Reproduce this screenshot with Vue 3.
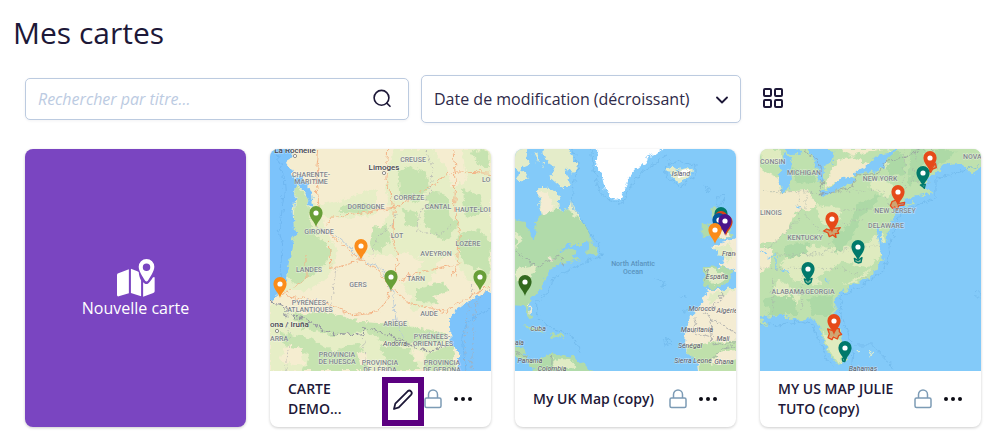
<script setup>
import { ref } from 'vue'

const query = ref('')
const sort = ref('desc')

const GREEN = '#689f38'
const ORANGE = '#fb8c1a'
const RED = '#e64a19'
const TEAL = '#00796b'

const cards = [
  {
    id: 'fr',
    title: 'CARTE DEMO...',
    editing: true,
    origin: 'scale(.33333) translate(-12 -12)',
    base: '#f5edd0',
    shapes: [
      { f: '#e6eec6', d: 'M90 120L115 115 150 180 230 165 330 130 330 210 220 220 165 215 180 260 215 320 190 400 130 435 45 440ZM380 12H500L540 70 560 130 675 60V430L600 400 560 330 520 345 480 440 500 480 440 500 420 440 380 330 300 330 330 270 370 200 360 120ZM12 470L90 500 200 540 420 530 560 590 520 678H12ZM590 12H675V120L600 100Z' },
      { f: '#c6e3b0', d: 'M90 120L125 160 135 240 160 280 195 310 190 340 150 385 90 420 62 390 80 260ZM395 80L430 60 480 85 490 130 450 175 400 150ZM410 190L450 200 460 240 420 245ZM490 140L545 150 550 210 580 240 540 290 500 270 470 230ZM230 180L300 175 330 190 280 205 220 200ZM320 250L360 240 375 290 340 320 310 300ZM590 130L640 150 650 200 600 220ZM570 270L640 250 675 300 670 390 630 370 590 350ZM450 430L530 410 550 440 500 455 520 475 450 470ZM80 510L190 500 280 530 420 540 540 565 530 590 430 600 350 590 300 560 200 570 100 545ZM40 560L130 580 200 620 280 590 310 678H110L130 630 60 610ZM340 600L430 610 460 678H370ZM480 630L560 600 570 678H470ZM610 20L660 12 675 70 640 60Z' },
      { f: '#f5edd0', d: 'M340 350L420 320 470 350 450 400 400 420 440 460 400 500 350 480ZM60 600L110 610 115 660 40 650ZM270 620L300 625 310 660 280 660ZM440 610L475 620 470 650 445 650Z' },
      { f: '#7cc3fb', d: 'M-30 -30H62L78 25 60 50 78 82 92 112 88 135 80 200 84 255 100 262 82 280 70 345 62 390 45 440 10 470H-30ZM92 92L122 112 138 150 142 190 132 180 118 145 92 118ZM720 430L640 450 600 475 560 505 552 530 554 600 580 625 575 720H720Z' }
    ],
    lines: [
      { s: '#f3b487', d: 'M158 12L150 100 160 190 150 245 200 275 285 345 340 380 375 430 430 475 540 500 600 460 675 420M365 12L360 100 385 190 380 280 395 350 375 430M385 190L470 140 560 80 675 85M185 235L200 215 385 190M120 330L120 400 50 450 180 470 250 510 340 500 375 430M190 290L195 370 240 360 285 345M560 12L570 100 565 200 580 260 575 350 560 400M400 410L440 385 560 360' },
      { s: '#b7c9d8', d: 'M151 248L220 280 285 340 350 375 380 440 390 530 415 580' },
      { s: '#68b0ec', w: 2, d: 'M30 20L50 80 55 140 40 260 50 300 40 400M600 678L590 590 600 530 675 490' },
      { s: '#aaaaaf', dash: '8 6', w: 2, d: 'M480 12L500 70 490 145 460 210 455 260 520 270 560 240M320 345L330 280 370 250 400 200M210 370L200 450 190 490M65 500L70 570 60 678M290 550L300 678M620 420L600 530 595 678M675 430L630 470 615 678' },
      { s: '#9698a0', dash: '18 5', w: 4, d: 'M12 468L60 485 60 510 120 520 150 545 200 565 290 570 290 548 370 570 430 600 490 620 555 600' }
    ],
    labels: [
      ['La Rochelle', 25, 4, 'town'], ['Limoges', 114, 21, 'town'], ['CREUSE', 143, 13], ['CHARENTE-', 41, 28], ['MARITIME', 41, 35],
      ['GIRONDE', 49, 85], ['DORDOGNE', 96, 60], ['CORRÈZE', 139, 51], ['CANTAL', 168, 60], ['HAUTE-LOIRE', 185, 63, 'start'], ['LOIRE', 212, 33, 'start'],
      ['LOT', 127, 89], ['LOZÈRE', 198, 97], ['AVEYRON', 166, 107], ['LANDES', 39, 123], ['GERS', 88, 138], ['TARN', 146, 132],
      ['PYRÉNÉES-', 40, 156], ['ATLANTIQUES', 40, 163], ['AUDE', 159, 167], ['ARIÈGE', 125, 177], ['ona / Iruña', 0, 178, 'town start'], ['ARRA', 0, 192, 'start'],
      ['Andorra', 125, 197, 'country'], ['PYRÉNÉES-', 162, 190], ['ORIENTALES', 163, 197], ['PROVINCIA', 67, 208], ['DE HUESCA', 67, 215],
      ['PROVINCIA', 110, 216], ['DE LÉRIDA', 110, 223], ['PROVINCIA', 172, 216], ['DE GERONA', 172, 223]
    ],
    towns: [[25, 7], [114, 24], [7, 182]],
    pins: [[46, 78, GREEN], [91, 111, ORANGE], [121, 142, GREEN], [210, 142, GREEN], [10, 149, ORANGE]]
  },
  {
    id: 'uk',
    title: 'My UK Map (copy)',
    origin: 'scale(.33333) translate(-15 -12)',
    base: '#83caf9',
    shapes: [
      { f: '#e4ecc9', d: 'M-20 -20H60L50 35 58 60 35 70 55 100 20 112 30 80 -20 60ZM95 -20H155L185 30 205 60 190 80 160 72 180 125 160 130 120 95 135 65 105 45ZM85 130L115 128 145 150 150 188 175 198 180 165 195 190 215 230 100 225 85 180ZM470 70L488 65 500 75 545 68 545 92 515 112 485 103 490 85 470 82ZM70 25L85 30 82 50ZM95 50L105 55 100 70Z' },
      { f: '#b1dbaa', d: 'M-20 215L45 232 60 270 78 285 80 250 72 228 100 208 150 190 185 200 215 230 240 260 245 288 215 300 168 300 145 325 185 305 200 318 185 335 215 345 150 355 112 385 100 400 98 430 65 460 52 485 70 515 64 525 50 505 42 482 -20 480ZM230 325L240 290 268 325 250 328ZM605 190L622 185 640 215 660 255 665 275 610 285 622 250 605 215ZM575 240L600 235 602 270 575 277ZM582 363L635 366 670 378 652 410 622 432 602 430 580 420ZM-20 590L40 605 45 630 80 650 125 625 190 635 265 700H80L60 655 -20 620ZM35 540L75 545 108 562 70 560ZM120 565L150 565 165 576 125 578Z' },
      { f: '#f4ecd3', d: 'M85 135L110 145 135 180 115 205 98 212 90 175ZM608 305L640 290 720 265V390L660 372 632 366 642 335ZM600 435L630 435 720 425V710H570L558 640 530 620 525 600 530 545 545 510 575 480 580 455ZM30 380L60 365 75 380 40 400ZM55 470L65 490 60 510ZM110 335L135 340 125 350ZM620 250L655 260 655 275 625 280Z' },
      { f: '#e0ebc4', d: 'M615 310L660 295 675 330 650 350ZM595 450L630 437 660 430 690 430 630 455 600 480ZM590 370L625 375 650 400 615 420 595 400ZM15 255L40 275 20 310ZM20 370L80 360 70 390 20 410ZM130 640L180 645 200 670 130 670Z' },
      { f: '#bfe0ab', d: 'M530 600L600 590 720 585V610L630 620 600 660 720 640V700H575L560 645 530 620Z' },
      { f: '#ffffff', d: 'M270 -20L258 60 275 90 285 135 300 155 330 165 345 130 355 100 380 70 405 60 410 35 440 25 490 -20ZM500 80L535 75 535 90 505 95Z' }
    ],
    lines: [
      { s: '#6db5e8', w: 2, d: 'M185 12L205 60 190 130 185 180 230 250 262 290 275 330 200 365 130 400 115 440 80 470 80 510 120 545 190 575 210 620M245 12L250 70 270 140 300 168 335 175 390 85 470 30M465 60L500 48 555 62 555 95 515 122 470 100ZM585 120L600 130 592 145ZM620 155L640 150 640 175 620 180ZM465 585L480 580 482 598 468 602ZM430 400L465 415 460 425M515 455L525 460M520 500L535 495' },
      { s: '#9698a0', w: 2, d: 'M15 320L80 365 130 340 160 335 160 360M580 505L675 565M555 520L560 535 550 565 600 580M600 525L605 590M635 435L635 465 585 500M610 600L675 590M600 650L640 610 675 600M590 375L588 412M15 620L60 640M125 625L120 690' }
    ],
    labels: [
      ['Island', 166, 27, 'country'], ['France', 207, 107, 'country start'], ['North Atlantic', 118, 117, 'sea'], ['Ocean', 118, 125, 'sea'], ['España', 202, 130, 'country'],
      ['Morocco', 187, 162, 'country'], ['Algérie', 212, 164, 'country'], ['Mauritania', 182, 183, 'country'], ['Mali', 208, 192, 'country'], ['Sénégal', 175, 199, 'country'],
      ['Sierra Leone', 178, 214, 'country'], ['Ghana', 209, 215, 'country'], ['Cuba', 23, 182, 'country'], ['Panama', 15, 214, 'country'], ['Colombia', 37, 222, 'country'], ['ala', 0, 196, 'country start']
    ],
    towns: [],
    pins: [[206, 79, TEAL], [206, 83, '#d84315'], [204, 85, '#01579b'], [211, 87, '#d84315'], [210, 86, '#4a148c'], [200, 95, ORANGE], [10, 147, '#33691e']]
  },
  {
    id: 'us',
    title: 'MY US MAP JULIE TUTO (copy)',
    origin: 'scale(.33333) translate(-12 -12)',
    base: '#bfe1ae',
    shapes: [
      { f: '#f2ebcb', d: 'M-20 60L70 100 75 140 160 135 180 190 120 200 100 250 60 290 -20 300ZM205 130L240 45 300 30 380 12H250L340 60 290 90ZM-20 300L50 310 40 370 -20 400Z' },
      { f: '#dfebbf', d: 'M12 12H70L75 60 20 50ZM180 180L260 190 240 250 200 240ZM130 300L300 310 380 260 395 320 330 370 260 350 180 400 200 420 120 410 70 360ZM60 400L130 440 120 490 50 480ZM200 560L260 590 262 655 245 655 215 610ZM350 100L420 120 400 160 340 130ZM400 12L430 70 400 90 380 40ZM260 420L350 370 300 410Z' },
      { f: '#add9a6', d: 'M110 70L170 80 180 110 120 115ZM390 30L440 20 450 90 400 95ZM465 12L510 12 490 110 455 120ZM540 12L600 20 570 50 540 60ZM230 270L310 220 290 280 240 330ZM20 460L110 450 130 510 40 510ZM150 460L230 450 230 510 170 510ZM90 300L160 290 150 330 90 340ZM300 180L370 150 350 190 290 230Z' },
      { f: '#83caf9', d: 'M720 -10H675L660 75 640 85 622 55 600 55 560 60 535 85 515 100 505 125 530 145 490 152 445 165 422 182 408 225 390 290 378 295 370 245 360 250 375 310 380 345 365 370 345 395 305 412 250 445 235 480 240 520 255 560 270 620 265 655 245 660 215 620 200 580 195 545 165 520 120 525 80 510 35 515 -20 510V720H720ZM85 20L105 40 110 60 100 130 80 145 68 110 75 60ZM70 -10H110L140 25 110 30 90 18ZM150 -10H200L235 30 228 55 202 65 205 105 190 110 180 60ZM190 140L225 125 260 98 300 93 290 115 240 135 200 155ZM295 80L340 60 350 40 385 25 420 12H430L395 40 385 68 350 80 300 88Z' },
      { f: '#bfe1ae', d: 'M622 50L635 20 720 -10V50L645 88 628 70ZM440 182L475 170 470 178 440 186ZM12 525L35 535 30 545 12 535Z' }
    ],
    lines: [
      { s: '#a9b5ab', dash: '6 5', w: 2, d: 'M12 140L75 140 160 140 200 150M130 150V220L60 290 12 320M150 140V215L200 260 320 220M255 140L380 135 400 180M445 12V130L440 160M480 12L470 110 520 115M240 275L200 330 60 330M140 330L380 300M140 370V500M12 370H250L340 400M50 400V520M380 195L250 195' },
      { s: '#6db5e8', w: 2, d: 'M675 60L600 85 540 100 540 160 440 195 420 240 400 300 395 340 380 380 320 420 260 450 250 500 275 560 290 630 285 670M12 535L70 540 130 530 170 540 195 600 230 670M300 600L350 600 390 640 410 670M655 450L670 440 680 450 665 460Z' },
      { s: '#83caf9', w: 4, d: 'M35 340L60 330 60 370M75 375L100 380M205 400L220 412M120 180L130 190M12 320L30 325' },
      { s: '#d9ecd2', w: 4, d: 'M340 635L348 625 338 613M305 620H315M240 520L246 550' },
      { s: '#8f939b', w: 2, d: 'M140 12L190 50 200 120 190 150 290 125 300 90 370 85 395 45 440 40 500 12M540 70L530 12' }
    ],
    zones: [
      { c: RED, d: 'M203 258L212 252 222 256 226 245 236 250 253 248 245 258 248 265 238 266 240 277 230 270 220 275 216 264Z' },
      { c: RED, d: 'M403 182L408 170 420 165 430 175 446 172 444 180 428 182 424 194 416 186 410 190Z' },
      { c: RED, d: 'M520 78L530 66 538 55 541 68 530 72 524 82Z' },
      { c: RED, d: 'M215 552L228 556 236 548 250 552 250 560 257 568 248 572 244 582 232 576 228 584 216 578 220 566Z' },
      { c: TEAL, d: 'M145 402L156 406 168 400 165 412 156 418 148 412Z' },
      { c: TEAL, d: 'M295 340L306 346 318 338 315 352 306 354 297 350Z' },
      { c: TEAL, d: 'M493 120L508 118 505 130 499 124Z' },
      { c: TEAL, d: 'M259 640L270 638 266 650 260 648Z' }
    ],
    labels: [
      ['CONSIN', 0, 15, 'start'], ['MICHIGAN', 44, 26], ['NEW YORK', 120, 32], ['NOVA', 203, 10, 'start'], ['NEW JERSEY', 135, 64],
      ['LINOIS', 0, 66, 'start'], ['DELAWARE', 126, 79], ['KENTUCKY', 45, 91], ['ALABAMA', 28, 145], ['GEORGIA', 60, 145], ['Bahamas', 103, 222, 'country']
    ],
    towns: [],
    pins: [[170, 23, RED], [138, 57, RED], [72, 84, RED], [74, 186, RED], [163, 38, TEAL], [98, 112, TEAL], [48, 134, TEAL], [85, 213, TEAL]]
  }
]
</script>

<template>
  <main class="page">
    <h1>Mes cartes</h1>

    <div class="toolbar">
      <div class="field search">
        <input v-model="query" type="text" placeholder="Rechercher par titre..." aria-label="Rechercher par titre" />
        <button class="plain" type="button" aria-label="Rechercher">
          <svg width="20" height="20" viewBox="0 0 20 20" fill="none" stroke="currentColor" stroke-width="1.6" stroke-linecap="round">
            <circle cx="9.5" cy="8.8" r="7.4" />
            <path d="M14.8 14.1l3.200 3.200" />
          </svg>
        </button>
      </div>

      <div class="field sort">
        <select v-model="sort" aria-label="Trier">
          <option value="desc">Date de modification (décroissant)</option>
          <option value="asc">Date de modification (croissant)</option>
        </select>
        <svg class="chevron" width="12" height="10" viewBox="0 0 12 10" fill="none" stroke="currentColor" stroke-width="1.8" stroke-linecap="round" stroke-linejoin="round">
          <path d="M1 3.500l5 5 5-5" />
        </svg>
      </div>

      <button class="plain layout" type="button" aria-label="Affichage en grille">
        <svg width="20" height="22" viewBox="0 0 20 22" fill="none" stroke="currentColor" stroke-width="2">
          <rect x="1" y="1" width="7" height="7" rx="1" />
          <rect x="12" y="1" width="7" height="7" rx="1" />
          <rect x="1" y="12" width="7" height="7" rx="1" />
          <rect x="12" y="12" width="7" height="7" rx="1" />
        </svg>
      </button>
    </div>

    <div class="grid">
      <button class="card create" type="button">
        <svg width="38" height="38" viewBox="0 0 112 112" fill="#fff">
          <path d="M0 47q0-4 4-5l31-12v71L5 110q-5 1-5-4z" />
          <path d="M41 29l19 7 4 2c1 10 3 17 7 25v47l-30-10z" />
          <path d="M77 68c3 4 6 6 10 6 6 0 14-12 18-19q6-4 6 1v39q0 4-4 5l-30 11z" />
          <path fill-rule="evenodd" d="M87 0a23 23 0 0 1 23 23c0 13-12 30-19 41q-4 4-8 0C76 53 64 36 64 23A23 23 0 0 1 87 0zm0 13a11 11 0 1 0 0 22 11 11 0 0 0 0-22z" />
        </svg>
        <span>Nouvelle carte</span>
      </button>

      <article v-for="card in cards" :key="card.id" class="card">
        <svg class="map" viewBox="0 0 221 222" preserveAspectRatio="xMidYMid slice" role="img" :aria-label="card.title">
          <defs>
            <filter :id="'rough-' + card.id" x="-5%" y="-5%" width="110%" height="110%" color-interpolation-filters="sRGB">
              <feTurbulence type="fractalNoise" baseFrequency=".06" numOctaves="3" seed="4" />
              <feDisplacementMap in="SourceGraphic" scale="24" xChannelSelector="R" yChannelSelector="G" />
            </filter>
          </defs>
          <rect width="221" height="222" :fill="card.base" />
          <g :transform="card.origin">
            <g :filter="`url(#rough-${card.id})`">
              <path v-for="(s, i) in card.shapes" :key="i" :d="s.d" :fill="s.f" />
              <path v-for="(l, i) in card.lines" :key="'l' + i" :d="l.d" fill="none" :stroke="l.s" :stroke-width="l.w || 3" :stroke-dasharray="l.dash" stroke-linejoin="round" />
            </g>
            <path v-for="(z, i) in card.zones" :key="'z' + i" :d="z.d" :fill="z.c" fill-opacity=".4" :stroke="z.c" stroke-width="4" stroke-linejoin="round" />
          </g>
          <circle v-for="(t, i) in card.towns" :key="'t' + i" :cx="t[0]" :cy="t[1]" r="1.6" fill="#fff" stroke="#666" stroke-width=".7" />
          <text v-for="(t, i) in card.labels" :key="'n' + i" :x="t[1]" :y="t[2]" class="label" :class="t[3]">{{ t[0] }}</text>
          <g v-for="(p, i) in card.pins" :key="'p' + i" :transform="`translate(${p[0]} ${p[1]})`">
            <path d="M0 0C-1-5-6.600-8.500-6.600-14.300A6.600 6.600 0 0 1 6.600-14.300C6.600-8.500 1-5 0 0z" :fill="p[2]" />
            <circle cy="-14" r="2.600" fill="#fff" />
          </g>
        </svg>

        <footer>
          <h2>{{ card.title }}</h2>
          <button v-if="card.editing" class="plain edit" type="button" aria-label="Modifier">
            <svg width="22" height="22" viewBox="0 0 22 22" fill="none" stroke="currentColor" stroke-width="1.8" stroke-linejoin="round">
              <path d="M2 20l1.300-5.400L15.600 2.300q1.800-1.500 3.400 0 1.600 1.700 0 3.500L6.800 18.300z" />
            </svg>
          </button>
          <svg class="lock" width="18" height="20" viewBox="0 0 18 20" fill="none" stroke="currentColor" stroke-width="1.500">
            <rect x="1" y="9" width="16" height="9.500" rx="1.500" />
            <path d="M4.500 9V5.500a4.500 4.500 0 0 1 9 0V9" />
          </svg>
          <button class="plain" type="button" aria-label="Plus d’options">
            <svg width="19" height="6" viewBox="0 0 19 6" fill="#0b0b14">
              <circle cx="2" cy="3" r="2" />
              <circle cx="9" cy="3" r="2" />
              <circle cx="16" cy="3" r="2" />
            </svg>
          </button>
        </footer>
      </article>
    </div>
  </main>
</template>

<style>
body {
  margin: 0;
  background: #fff;
}
</style>

<style scoped>
.page {
  padding: 11px 11px 10px 13px;
  color: #1d1838;
  font-family: 'Open Sans', 'Noto Sans', sans-serif;
}

h1 {
  margin: 0;
  font-size: 30px;
  line-height: 44px;
  font-weight: 400;
}

.toolbar {
  display: flex;
  align-items: center;
  margin: 20px 0 26px 12px;
  gap: 12px;
}

.field {
  display: flex;
  align-items: center;
  box-sizing: border-box;
  border: 1px solid #bccbe0;
  border-radius: 5px;
  box-shadow: 0 1px 3px rgba(30, 30, 60, 0.06);
  background: #fff;
}

.search {
  flex: 0 1 384px;
  height: 42px;
  padding: 0 16px 0 12px;
}

.sort {
  flex: 0 1 320px;
  height: 48px;
  padding-right: 12px;
}

input,
select {
  flex: 1;
  min-width: 0;
  height: 100%;
  padding: 0;
  border: 0;
  outline: 0;
  background: none;
  color: #2e2a48;
  font: inherit;
  font-size: 16px;
}

select {
  appearance: none;
  padding: 0 24px 0 12px;
  margin-right: -12px;
}

.chevron {
  pointer-events: none;
}

input::placeholder {
  color: #bccbe2;
  font-style: italic;
  opacity: 1;
}

.plain {
  display: flex;
  align-items: center;
  justify-content: center;
  padding: 0;
  border: 0;
  background: none;
  color: inherit;
}

.layout {
  margin-left: 10px;
}

.grid {
  display: grid;
  grid-template-columns: repeat(4, minmax(0, 1fr));
  gap: 24px;
  margin-left: 12px;
}

.card {
  display: flex;
  flex-direction: column;
  overflow: hidden;
  border-radius: 8px;
  background: #fff;
  box-shadow: 0 1px 3px rgba(0, 0, 0, 0.2);
}

.create {
  align-items: center;
  justify-content: center;
  padding: 2px 0 0;
  border: 0;
  background: #7a45c1;
  color: #fff;
  font: inherit;
  font-size: 16px;
  font-weight: 500;
  line-height: 22px;
}

.map {
  display: block;
  width: 100%;
}

.label {
  fill: #7f858c;
  stroke: rgba(255, 255, 255, 0.5);
  stroke-width: 1px;
  paint-order: stroke;
  font-family: Roboto, sans-serif;
  font-size: 7px;
  font-weight: 500;
  text-anchor: middle;
}

.label.start {
  text-anchor: start;
}

.label.town {
  fill: #45454f;
  font-size: 8px;
}

.label.country {
  fill: #55555f;
  font-weight: 400;
  font-style: italic;
}

.label.sea {
  fill: #5a93bd;
  stroke: none;
}

footer {
  display: flex;
  align-items: center;
  min-height: 56px;
  padding: 0 18px;
}

h2 {
  flex: 1;
  margin: 0;
  font-size: 14px;
  line-height: 20px;
  font-weight: 600;
}

.edit {
  box-sizing: border-box;
  flex: none;
  width: 42px;
  height: 49px;
  margin-top: 5px;
  border: 6px solid #5b0080;
}

.edit svg {
  margin-bottom: 4px;
}

.lock {
  flex: none;
  margin-right: 12px;
  color: #7c9bb5;
}
</style>
